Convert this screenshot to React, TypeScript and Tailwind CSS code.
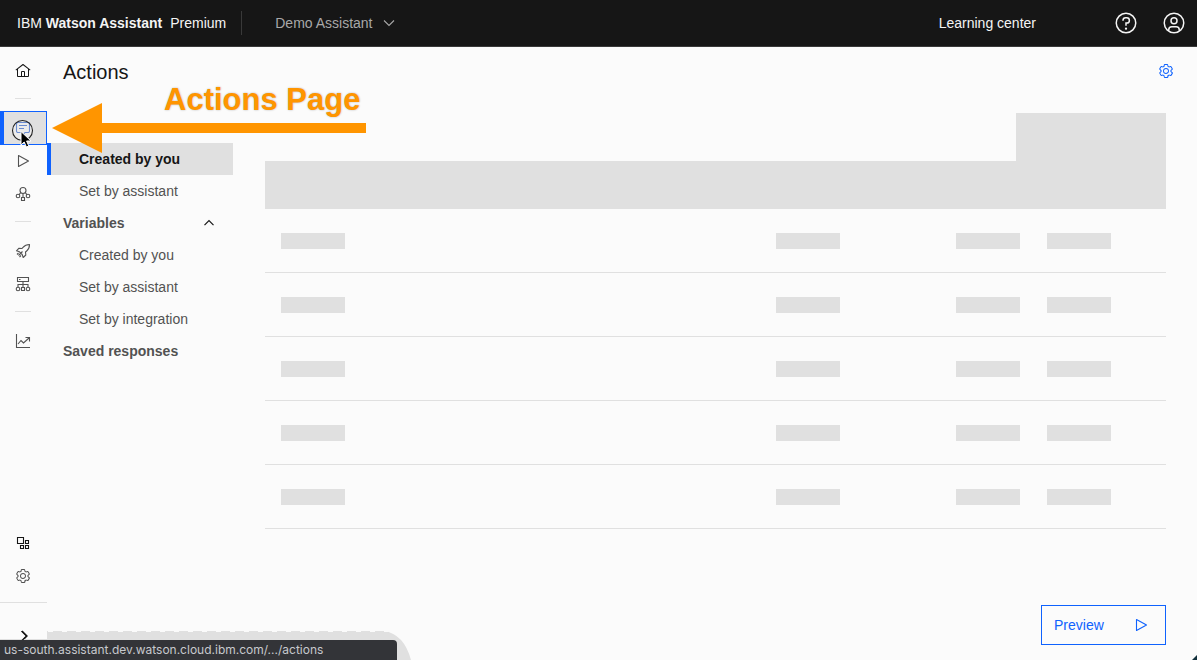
import type { ReactNode } from "react";

const GEAR =
  "M13.5,8.4c0-0.1,0-0.3,0-0.4c0-0.1,0-0.3,0-0.4l1-0.8c0.4-0.3,0.4-0.9,0.2-1.3l-1.2-2C13.3,3.2,13,3,12.6,3c-0.1,0-0.2,0-0.3,0.1l-1.2,0.4c-0.2-0.1-0.4-0.3-0.7-0.4l-0.3-1.3C10.1,1.3,9.7,1,9.2,1H6.8c-0.5,0-0.9,0.3-1,0.8L5.6,3.1C5.3,3.2,5.1,3.3,4.9,3.4L3.7,3C3.6,3,3.5,3,3.4,3C3,3,2.7,3.2,2.5,3.5l-1.2,2C1.1,5.9,1.2,6.4,1.6,6.8l0.9,0.9c0,0.1,0,0.3,0,0.4c0,0.1,0,0.3,0,0.4L1.6,9.2c-0.4,0.3-0.5,0.9-0.2,1.3l1.2,2C2.7,12.8,3,13,3.4,13c0.1,0,0.2,0,0.3-0.1l1.2-0.4c0.2,0.1,0.4,0.3,0.7,0.4l0.3,1.3c0.1,0.5,0.5,0.8,1,0.8h2.4c0.5,0,0.9-0.3,1-0.8l0.3-1.3c0.2-0.1,0.4-0.2,0.7-0.4l1.2,0.4c0.1,0,0.2,0.1,0.3,0.1c0.4,0,0.7-0.2,0.9-0.5l1.1-2c0.2-0.4,0.2-0.9-0.2-1.3L13.5,8.4z M12.6,12l-1.7-0.6c-0.4,0.3-0.9,0.6-1.4,0.8L9.2,14H6.8l-0.4-1.8c-0.5-0.2-0.9-0.5-1.4-0.8L3.4,12l-1.2-2l1.4-1.2c-0.1-0.5-0.1-1.1,0-1.6L2.2,6l1.2-2l1.7,0.6C5.5,4.2,6,4,6.5,3.8L6.8,2h2.4l0.4,1.8c0.5,0.2,0.9,0.5,1.4,0.8L12.6,4l1.2,2l-1.4,1.2c0.1,0.5,0.1,1.1,0,1.6l1.4,1.2L12.6,12z M8,11c-1.7,0-3-1.3-3-3s1.3-3,3-3s3,1.3,3,3C11,9.6,9.7,11,8,11C8,11,8,11,8,11z M8,6C6.9,6,6,6.8,6,7.9C6,7.9,6,8,6,8c0,1.1,0.8,2,1.9,2c0,0,0.1,0,0.1,0c1.1,0,2-0.8,2-1.9c0,0,0-0.1,0-0.1C10,6.9,9.2,6,8,6z";

function Line({ children }: { children: ReactNode }) {
  return (
    <svg viewBox="0 0 16 16" className="size-4" fill="none" stroke="currentColor" strokeWidth="1.1" aria-hidden="true">
      {children}
    </svg>
  );
}

function Gear() {
  return (
    <svg viewBox="0 0 16 16" className="size-4" fill="currentColor" aria-hidden="true">
      <path d={GEAR} />
    </svg>
  );
}

function Home() {
  return (
    <svg viewBox="0 0 32 32" className="size-4" fill="currentColor" aria-hidden="true">
      <path d="M16.6123,2.2138a1.01,1.01,0,0,0-1.2427,0L1,13.4194l1.2427,1.5717L4,13.6208V26a2.0041,2.0041,0,0,0,2,2H26a2.0037,2.0037,0,0,0,2-2V13.63L29.7573,15,31,13.4282ZM18,26H14V18h4Zm2,0V18a2.0023,2.0023,0,0,0-2-2H14a2.002,2.002,0,0,0-2,2v8H6V12.0615l10-7.79,10,7.8005V26Z" />
    </svg>
  );
}

function Help() {
  return (
    <svg viewBox="0 0 32 32" className="size-6" fill="currentColor" aria-hidden="true">
      <path d="M16,2A14,14,0,1,0,30,16,14,14,0,0,0,16,2Zm0,26A12,12,0,1,1,28,16,12,12,0,0,1,16,28Z" />
      <circle cx="16" cy="23.5" r="1.5" />
      <path d="M17,8H15.5A4.49,4.49,0,0,0,11,12.5V13h2v-.5A2.5,2.5,0,0,1,15.5,10H17a2.5,2.5,0,0,1,0,5H15v4.5h2V17a4.5,4.5,0,0,0,0-9Z" />
    </svg>
  );
}

function Avatar() {
  return (
    <svg viewBox="0 0 32 32" className="size-6" fill="currentColor" aria-hidden="true">
      <path d="M16,8a5,5,0,1,0,5,5A5,5,0,0,0,16,8Zm0,8a3,3,0,1,1,3-3A3.0034,3.0034,0,0,1,16,16Z" />
      <path d="M16,2A14,14,0,1,0,30,16,14.0158,14.0158,0,0,0,16,2ZM10,26.3765V25a3.0033,3.0033,0,0,1,3-3h6a3.0033,3.0033,0,0,1,3,3v1.3765a11.8989,11.8989,0,0,1-12,0Zm13.9925-1.4507A5.0016,5.0016,0,0,0,19,20H13a5.0016,5.0016,0,0,0-4.9925,4.9258,12,12,0,1,1,15.985,0Z" />
    </svg>
  );
}

const Play = () => (
  <Line>
    <path d="M3.5 2.5v11L13.5 8z" strokeLinejoin="round" />
  </Line>
);

const Chat = () => (
  <Line>
    <path d="M6 12.5H3A1.5 1.5 0 0 1 1.5 11V4A1.5 1.5 0 0 1 3 2.5h10A1.5 1.5 0 0 1 14.5 4v7a1.5 1.5 0 0 1-1.5 1.500h-3L8 15M4 5.500h8M4 8.500h5" />
  </Line>
);

const Assembly = () => (
  <Line>
    <circle cx="8" cy="4.5" r="3" />
    <circle cx="3" cy="10" r="1.8" />
    <circle cx="13" cy="10" r="1.8" />
    <path d="M6.500 11.500h3v3h-3zM8 7.500v4M5.700 6.500L4 8.900M10.300 6.500L12 8.900" />
  </Line>
);

const Rocket = () => (
  <Line>
    <path d="M14.500 1.500c-3 0-4.800.8-6.500 2.800L7 5.500l-3-.3L1.500 7.800l3 1 2.700 2.700 1 3 2.600-2.500-.3-3 1.200-1c2-1.700 2.800-3.500 2.800-6.500zM7.500 8.500l-4 4M3.500 10L2 11.500M6 12.500L4.500 14" strokeLinejoin="round" />
  </Line>
);

const Environments = () => (
  <Line>
    <path d="M2.500 1.500h11v4h-11zM4 3.500h1.500M8 5.500v6M3 11V8.500h10V11M6.500 11.500h3v3h-3z" />
    <circle cx="3" cy="13" r="1.8" />
    <circle cx="13" cy="13" r="1.8" />
  </Line>
);

const Chart = () => (
  <Line>
    <path d="M1.500 1v13.500H15M3 11l3-3.500 2.500 2.500L14 5M10.500 4.500h4v4" />
  </Line>
);

const Integrations = () => (
  <Line>
    <path d="M2.500 2.500h6v6h-6zM10.500 5.500h3v3h-3zM10.500 10.500h3v3h-3zM5.500 10.500h3v3h-3z" />
  </Line>
);

function RailLink({ label, strong, children }: { label: string; strong?: boolean; children: ReactNode }) {
  return (
    <a
      href="#"
      aria-label={label}
      className={`flex h-[33px] shrink-0 items-center justify-center pr-px ${strong ? "text-[#161616]" : "text-[#525252]"}`}
    >
      {children}
    </a>
  );
}

function RailDivider() {
  return (
    <div className="flex h-6 shrink-0 items-center justify-center pb-0.5 pr-px">
      <div className="h-px w-4 bg-[#e0e0e0]" />
    </div>
  );
}

function Pointer() {
  return (
    <svg viewBox="0 0 28 40" className="pointer-events-none absolute left-1 top-0 z-10 h-10 w-7" aria-hidden="true">
      <circle cx="14.5" cy="18.500" r="10" fill="#fff" fillOpacity="0.35" stroke="#222" strokeWidth="1.1" />
      <path d="M13 19.500v13.500l3.200-3 2.200 5 2.400-1-2.200-5h4.400z" fill="#000" stroke="#fff" strokeWidth="1" />
    </svg>
  );
}

function Rail() {
  return (
    <nav aria-label="Main" className="flex w-[47px] shrink-0 flex-col pt-[7px]">
      <RailLink label="Home" strong><Home /></RailLink>
      <RailDivider />
      <a
        href="#"
        aria-label="Actions"
        aria-current="page"
        className="relative -mb-px flex h-[34px] shrink-0 items-center justify-center border border-l-4 border-[#0f62fe] bg-[#e0e0e0] pr-1 text-[#1d4fb8]"
      >
        <Chat />
        <Pointer />
      </a>
      <RailLink label="Preview"><Play /></RailLink>
      <RailLink label="Assembly"><Assembly /></RailLink>
      <RailDivider />
      <RailLink label="Publish"><Rocket /></RailLink>
      <RailLink label="Environments"><Environments /></RailLink>
      <RailDivider />
      <RailLink label="Analytics"><Chart /></RailLink>
      <div className="grow" />
      <RailLink label="Integrations" strong><Integrations /></RailLink>
      <RailLink label="Settings"><Gear /></RailLink>
      <button
        aria-label="Expand navigation"
        className="mt-2.5 flex h-[58px] shrink-0 justify-center border-t border-[#e0e0e0] pt-[25px] text-[#161616]"
      >
        <Line><path d="M6 3l5 5-5 5" strokeWidth="1.3" /></Line>
      </button>
    </nav>
  );
}

function SubLink({ label }: { label: string }) {
  return (
    <a href="#" className="flex h-8 items-center pl-8 text-[#525252]">{label}</a>
  );
}

function SideNav() {
  return (
    <aside className="w-[186px] shrink-0 text-sm">
      <h1 className="mt-2.5 pl-4 text-xl leading-[30px] text-[#161616]">Actions</h1>
      <nav aria-label="Actions" className="mt-14">
        <a
          href="#"
          aria-current="page"
          className="flex h-8 items-center border-l-4 border-[#0f62fe] bg-[#e0e0e0] pl-7 font-bold text-[#161616]"
        >
          Created by you
        </a>
        <SubLink label="Set by assistant" />
        <button className="flex h-8 w-full items-center justify-between pl-4 pr-4 font-bold text-[#525252]">
          Variables
          <span className="text-[#161616]"><Line><path d="M3.5 10.2L8 5.700l4.500 4.500" strokeWidth="1.2" /></Line></span>
        </button>
        <SubLink label="Created by you" />
        <SubLink label="Set by assistant" />
        <SubLink label="Set by integration" />
        <a href="#" className="flex h-8 items-center pl-4 font-bold text-[#525252]">Saved responses</a>
      </nav>
    </aside>
  );
}

function SkeletonTable() {
  return (
    <div>
      <div className="ml-auto h-12 w-[150px] bg-[#e0e0e0]" />
      <table className="w-full table-fixed border-separate border-spacing-0" aria-busy="true" aria-label="Actions">
        <colgroup>
          <col />
          <col className="w-[180px]" />
          <col className="w-[91px]" />
          <col className="w-[135px]" />
        </colgroup>
        <thead>
          <tr className="h-12 bg-[#e0e0e0]">
            <th /><th /><th /><th />
          </tr>
        </thead>
        <tbody>
          {[0, 1, 2, 3, 4].map((row) => (
            <tr key={row} className="h-16">
              {[0, 1, 2, 3].map((cell) => (
                <td key={cell} className="border-b border-[#e0e0e0] p-0 pl-4 pt-px">
                  <div className="h-4 w-16 bg-[#e0e0e0]" />
                </td>
              ))}
            </tr>
          ))}
        </tbody>
      </table>
    </div>
  );
}

function Header() {
  return (
    <header className="flex h-[47px] shrink-0 items-center border-b border-[#393939] bg-[#161616] pl-[17px] pr-[11px] text-sm text-[#f4f4f4]">
      <a href="#" className="whitespace-nowrap">
        IBM <strong className="font-bold">Watson Assistant</strong>
        <span className="ml-2">Premium</span>
      </a>
      <div className="ml-[15px] h-6 w-px bg-[#393939]" />
      <button className="ml-[33px] flex items-center gap-2 text-[#a8a8a8]">
        Demo Assistant
        <Line><path d="M3 5.5l5 5 5-5" /></Line>
      </button>
      <a href="#" className="ml-auto">Learning center</a>
      <button aria-label="Help" className="ml-[78px]"><Help /></button>
      <button aria-label="Account" className="ml-6"><Avatar /></button>
    </header>
  );
}

function Annotation() {
  return (
    <div className="pointer-events-none absolute left-[52px] top-[84px] w-[314px] text-[#ff9500]">
      <p className="pl-28 text-[31px] font-bold leading-8 [text-shadow:0_0_2px_#b0b0b0]">Actions Page</p>
      <svg viewBox="0 0 314 50" className="absolute left-0 top-[19px] h-[50px] w-[314px]" fill="currentColor" aria-hidden="true">
        <path d="M0 25L50 0v20h264v10H50v20z" />
      </svg>
    </div>
  );
}

function StatusBar() {
  return (
    <div className="pointer-events-none absolute bottom-0 left-0 w-[411px]">
      <svg viewBox="0 0 411 29" className="h-[29px] w-[411px]" aria-hidden="true">
        <path d="M0 8h47V0h337q20 3 27 29H0z" fill="#e0e0e0" />
        <path d="M48 .5h340" stroke="#fbfbfb" strokeDasharray="5 9" />
        <path d="M21.500 0l5 5-5 5" fill="none" stroke="#161616" strokeWidth="1.3" />
      </svg>
      <div className="absolute bottom-0 left-0 h-5 w-[397px] rounded-tr bg-[#333438] pl-1 font-['Inter',sans-serif] text-[12px] leading-5 text-[#c7c9cd]">
        us-south.assistant.dev.watson.cloud.ibm.com/.../actions
      </div>
    </div>
  );
}

export default function App() {
  return (
    <div className="relative flex min-h-screen flex-col overflow-hidden bg-[#fbfbfb] font-['Liberation_Sans',Arial,sans-serif]">
      <Header />
      <div className="flex grow">
        <Rail />
        <SideNav />
        <main className="flex min-w-0 grow flex-col pl-8 pr-[31px]">
          <div className="mb-[34px] mt-4 flex justify-end">
            <button aria-label="Page settings" className="-mr-2 text-[#0f62fe]"><Gear /></button>
          </div>
          <SkeletonTable />
          <div className="mb-[15px] mt-auto flex justify-end">
            <button className="flex h-10 w-[125px] items-center justify-between border border-[#0f62fe] pl-3 pr-4 text-sm text-[#0f62fe]">
              Preview
              <Play />
            </button>
          </div>
        </main>
      </div>
      <Annotation />
      <StatusBar />
      <svg viewBox="0 0 5 5" className="absolute bottom-0 right-0 size-[5px]" aria-hidden="true">
        <path d="M5 0v5H0z" fill="#12303c" />
      </svg>
    </div>
  );
}
